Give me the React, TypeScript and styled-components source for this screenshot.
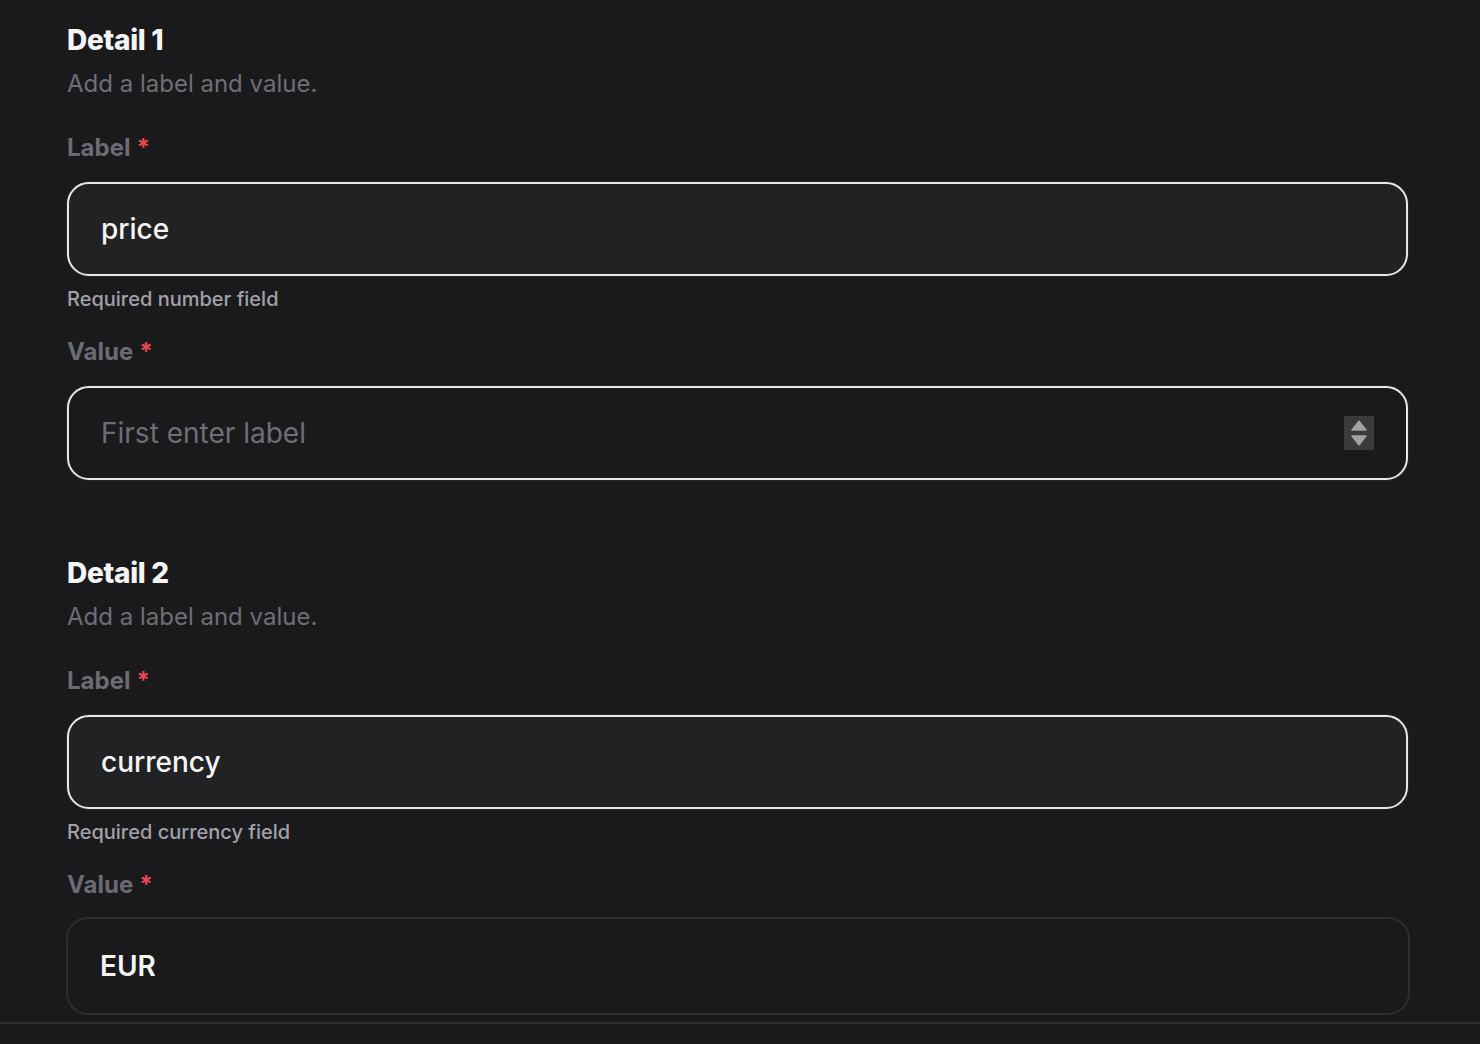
import React from "react";
import styled, { createGlobalStyle } from "styled-components";

const Global = createGlobalStyle`
  html, body { margin: 0; padding: 0; background: #1a1a1c; }
  body { font-family: Inter, "Noto Sans", sans-serif; -webkit-font-smoothing: antialiased; }
  * { box-sizing: border-box; }
`;

const Page = styled.div`
  height: 1044px;
  overflow: hidden;
  background: #1a1a1c;
  display: flex;
  flex-direction: column;
`;

const Content = styled.div`
  flex: 1;
  min-height: 0;
  padding: 22px 72px 0 67px;
  display: flex;
  flex-direction: column;
  gap: 75px;
  overflow: hidden;
`;

const Section = styled.section`
  display: flex;
  flex-direction: column;
  flex-shrink: 0;
`;

const Title = styled.h2`
  margin: 0;
  font-size: 28px;
  line-height: 36px;
  font-weight: 800;
  letter-spacing: -0.3px;
  color: #f4f4f5;
`;

const Subtitle = styled.p`
  margin: 10px 0 0;
  font-size: 24px;
  line-height: 32px;
  font-weight: 400;
  color: #6e6e76;
`;

const FieldLabel = styled.label<{ $tight?: boolean }>`
  display: block;
  margin-top: ${(p) => (p.$tight ? "24px" : "32px")};
  font-size: 24px;
  line-height: 32px;
  font-weight: 700;
  color: #6b6b73;
`;

const Star = styled.span`
  color: #e5484d;
  margin-left: 6px;
`;

const InputBox = styled.div<{ $filled?: boolean; $muted?: boolean }>`
  flex-shrink: 0;
  margin-top: ${(p) => (p.$muted ? "16px" : "18px")};
  margin-left: ${(p) => (p.$muted ? "-1px" : "0")};
  margin-right: ${(p) => (p.$muted ? "-2px" : "0")};
  height: ${(p) => (p.$muted ? "98px" : "94px")};
  border: ${(p) => (p.$muted ? "2px solid #2e2e31" : "2px solid #e8e8ea")};
  border-radius: 22px;
  background: ${(p) => (p.$filled ? "#222224" : "#1a1a1c")};
  display: flex;
  align-items: center;
  padding: 0 32px;
  box-shadow: ${(p) => (p.$muted ? "none" : "0 0 0 1px rgba(255,255,255,0.06)")};
`;

const InputText = styled.span<{ $placeholder?: boolean; $bold?: boolean }>`
  flex: 1;
  font-size: 28px;
  line-height: 36px;
  font-weight: ${(p) => (p.$placeholder ? 400 : p.$bold ? 600 : 500)};
  color: ${(p) => (p.$placeholder ? "#6e6e78" : "#f4f4f5")};
`;

const Helper = styled.div`
  margin-top: 10px;
  font-size: 20px;
  line-height: 26px;
  font-weight: 500;
  color: #a1a1aa;
`;

const Stepper = styled.div`
  width: 30px;
  height: 34px;
  background: #3a3a3d;
  display: flex;
  flex-direction: column;
  align-items: center;
  justify-content: center;
  gap: 4px;
`;

const BottomBar = styled.div`
  height: 22px;
  flex-shrink: 0;
  border-top: 2px solid #2e2e31;
  background: #1a1a1c;
`;

const Up = () => (
  <svg width="16" height="11" viewBox="0 0 16 11">
    <path d="M8 1.2 L15 10 L1 10 Z" fill="#a3a3a6" stroke="#a3a3a6" strokeWidth="1.5" strokeLinejoin="round" />
  </svg>
);
const Down = () => (
  <svg width="16" height="11" viewBox="0 0 16 11">
    <path d="M1 1 L15 1 L8 9.8 Z" fill="#a3a3a6" stroke="#a3a3a6" strokeWidth="1.5" strokeLinejoin="round" />
  </svg>
);

export default function App() {
  return (
    <Page>
      <Global />
      <Content>
        <Section>
          <Title>Detail 1</Title>
          <Subtitle>Add a label and value.</Subtitle>
          <FieldLabel>
            Label<Star>*</Star>
          </FieldLabel>
          <InputBox $filled>
            <InputText>price</InputText>
          </InputBox>
          <Helper>Required number field</Helper>
          <FieldLabel $tight>
            Value<Star>*</Star>
          </FieldLabel>
          <InputBox>
            <InputText $placeholder>First enter label</InputText>
            <Stepper>
              <Up />
              <Down />
            </Stepper>
          </InputBox>
        </Section>
        <Section>
          <Title>Detail 2</Title>
          <Subtitle>Add a label and value.</Subtitle>
          <FieldLabel>
            Label<Star>*</Star>
          </FieldLabel>
          <InputBox $filled>
            <InputText>currency</InputText>
          </InputBox>
          <Helper>Required currency field</Helper>
          <FieldLabel $tight>
            Value<Star>*</Star>
          </FieldLabel>
          <InputBox $muted>
            <InputText $bold>EUR</InputText>
          </InputBox>
        </Section>
      </Content>
      <BottomBar />
    </Page>
  );
}
